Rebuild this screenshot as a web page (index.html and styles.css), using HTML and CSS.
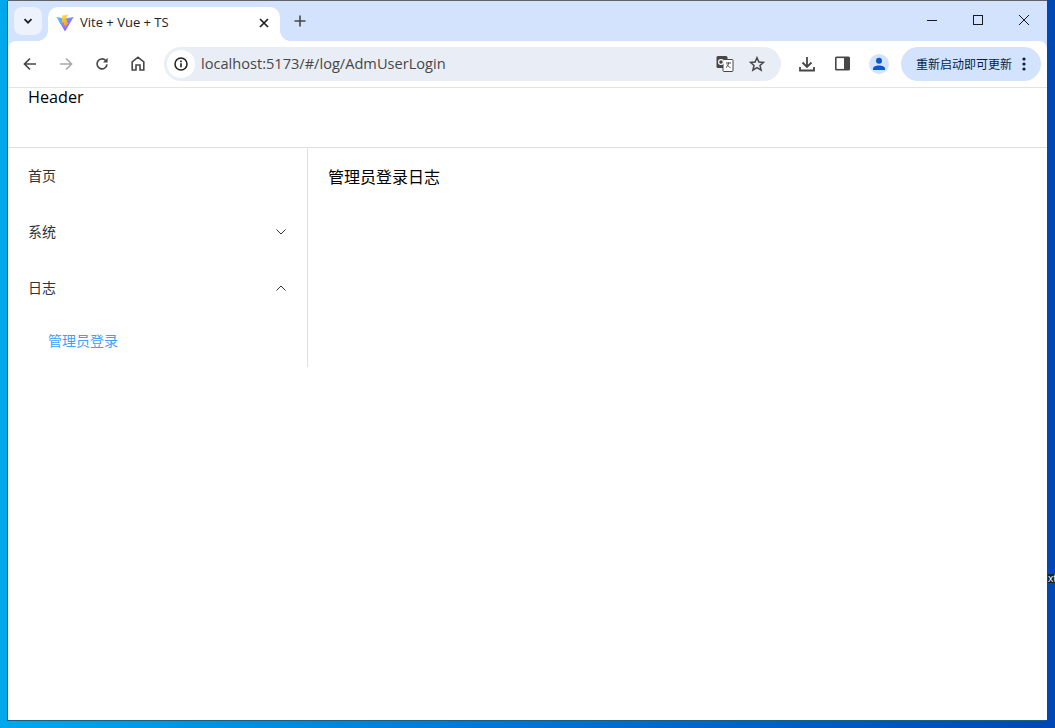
FILE: index.html
```html
<!DOCTYPE html>
<html lang="zh-CN">
<head>
  <meta charset="UTF-8" />
  <title>Vite + Vue + TS</title>
  <meta name="viewport" content="width=device-width, initial-scale=1.0" />
  <link rel="stylesheet" href="styles.css">
</head>
<body>
  <div class="window">

    <!-- tab strip -->
    <div class="tabstrip">
      <button class="tabSearch">
        <svg width="12" height="12" viewBox="0 0 12 12"><path d="M2.5 4.2 6 7.7l3.5-3.5" fill="none" stroke="#1f1f1f" stroke-width="1.8"/></svg>
      </button>
      <div class="tab">
        <svg class="favicon" width="18" height="18" viewBox="0 0 18 18">
          <defs>
            <linearGradient id="viteA" x1="0" y1="0" x2="1" y2="1"><stop offset="0" stop-color="#41d1ff"/><stop offset="1" stop-color="#bd34fe"/></linearGradient>
            <linearGradient id="viteB" x1="0" y1="0" x2="0" y2="1"><stop offset="0" stop-color="#ffdd55"/><stop offset="1" stop-color="#ff9a00"/></linearGradient>
          </defs>
          <path d="M0.4 3 9 17.4 17.6 3 9 4.6z" fill="url(#viteA)"/>
          <path d="M12.4 0.4 6.2 1.6 5.800 8.800l2.200-.4-.4 2.800 1.600-.4-.4 3.200L12.400 8.400l-2 .4.700-3-2 .4z" fill="url(#viteB)"/>
        </svg>
        <span class="tabTitle">Vite + Vue + TS</span>
        <svg class="tabClose" width="10" height="10" viewBox="0 0 10 10"><path d="M1 1l8 8M9 1 1 9" stroke="#1f1f1f" stroke-width="1.7"/></svg>
      </div>
      <svg class="newTab" width="12" height="12" viewBox="0 0 12 12"><path d="M6 0.5v11M0.5 6h11" stroke="#474747" stroke-width="1.6"/></svg>
      <div class="winBtns">
        <svg width="10" height="10" viewBox="0 0 10 10"><path d="M0 5.500h10" stroke="#1a1a1a"/></svg>
        <svg width="10" height="10" viewBox="0 0 10 10"><rect x="0.5" y="0.5" width="9" height="9" fill="none" stroke="#1a1a1a"/></svg>
        <svg width="10" height="10" viewBox="0 0 10 10"><path d="M0 0l10 10M10 0 0 10" stroke="#1a1a1a"/></svg>
      </div>
    </div>

    <!-- address bar -->
    <div class="toolbar">
      <div class="navBtns">
        <svg width="14" height="14" viewBox="0 0 14 14"><path d="M13 7H2M7 1.5 1.5 7 7 12.5" fill="none" stroke="#474747" stroke-width="1.7"/></svg>
        <svg width="14" height="14" viewBox="0 0 14 14"><path d="M1 7h11M7 1.5 12.5 7 7 12.5" fill="none" stroke="#ababab" stroke-width="1.7"/></svg>
        <svg width="14" height="14" viewBox="0 0 14 14"><path d="M12 7.4A5 5 0 1 1 10.6 3.4" fill="none" stroke="#474747" stroke-width="1.6"/><path d="M12.6 0.8v4.6H8z" fill="#474747"/></svg>
        <svg width="14" height="15" viewBox="0 0 14 15"><path d="M1.2 14V5.8L7 1.2l5.8 4.6V14H9V9H5v5z" fill="none" stroke="#474747" stroke-width="1.6"/></svg>
      </div>
      <div class="omnibox">
        <div class="siteInfo">
          <svg width="14" height="14" viewBox="0 0 14 14"><circle cx="7" cy="7" r="6" fill="none" stroke="#1f1f1f" stroke-width="1.5"/><path d="M7 6.2v4M7 3.6v1.6" stroke="#1f1f1f" stroke-width="1.6"/></svg>
        </div>
        <span class="url">localhost:5173/#/log/AdmUserLogin</span>
        <svg class="translate" width="18" height="18" viewBox="0 0 18 18"><rect x="0.5" y="1" width="11" height="12" rx="1.5" fill="#474747"/><rect x="7" y="4.500" width="10" height="12" rx="1" fill="#fff" stroke="#474747"/><circle cx="5" cy="7" r="2.400" fill="none" stroke="#fff" stroke-width="1.200"/><path d="M10 8h5M12.500 7.500c0 2.500-1 4-2.500 5M11 9.500c.8 1.500 2.200 2.800 3.500 3.200" fill="none" stroke="#474747"/></svg>
        <svg class="star" width="16" height="16" viewBox="0 0 16 16"><path d="M8 1.700l1.900 4.300 4.600.4-3.500 3.100 1.100 4.600L8 11.700l-4.100 2.400L5 9.500 1.500 6.400l4.600-.4z" fill="none" stroke="#474747" stroke-width="1.500"/></svg>
      </div>
      <div class="actions">
        <svg width="16" height="16" viewBox="0 0 16 16"><path d="M8 1v9.500M3.500 6.500 8 11l4.500-4.500" fill="none" stroke="#474747" stroke-width="1.800"/><path d="M1 11v3.500h14V11" fill="none" stroke="#474747" stroke-width="1.800"/></svg>
        <svg width="15" height="15" viewBox="0 0 15 15"><rect x="0" y="0.500" width="15" height="14" rx="1.500" fill="#474747"/><rect x="1.600" y="2.100" width="7.400" height="10.800" fill="#fff"/></svg>
        <div class="avatar">
          <svg width="14" height="14" viewBox="0 0 14 14"><circle cx="7" cy="3.800" r="3" fill="#0b57d0"/><path d="M1 13v-1.400C1 9.600 4 8.400 7 8.400s6 1.200 6 3.200V13z" fill="#0b57d0"/></svg>
        </div>
      </div>
      <div class="updateBtn">
        <span>重新启动即可更新</span>
        <svg width="4" height="14" viewBox="0 0 4 14"><circle cx="2" cy="2" r="1.600" fill="#041e49"/><circle cx="2" cy="7" r="1.600" fill="#041e49"/><circle cx="2" cy="12" r="1.600" fill="#041e49"/></svg>
      </div>
    </div>

    <!-- page -->
    <div class="page">
      <header class="pageHeader">Header</header>
      <div class="pageBody">
        <ul class="menu">
          <li class="menuItem">首页</li>
          <li class="menuItem">系统
            <svg width="10" height="6" viewBox="0 0 10 6"><path d="M0.500 0.500 5 5l4.500-4.500" fill="none" stroke="#303133"/></svg>
          </li>
          <li class="menuItem">日志
            <svg width="10" height="6" viewBox="0 0 10 6"><path d="M0.500 5.500 5 1l4.500 4.500" fill="none" stroke="#303133"/></svg>
          </li>
          <li class="subItem">管理员登录</li>
        </ul>
        <main class="content">管理员登录日志</main>
      </div>
    </div>
  </div>
  <span class="desktopLabel">xt</span>
</body>
</html>
```

FILE: styles.css
```css
* {
  box-sizing: border-box;
}

html, body {
  height: 100%;
}

body {
  margin: 0;
  padding: 0 8px 8px;
  background: linear-gradient(90deg, #00a8ec 0%, #0078d7 45%, #0048b4 100%);
  font-family: "Open Sans", "Noto Sans CJK SC", sans-serif;
  overflow: hidden;
}

.window {
  height: 100%;
  display: flex;
  flex-direction: column;
  background: #d3e3fd;
  box-shadow: -1px 1px 0 #1d5f80;
}

.tabstrip {
  height: 41px;
  flex: none;
  display: flex;
  align-items: flex-end;
  border-top: 1px solid #5f6368;
  padding-left: 6px;
}

.tabSearch {
  width: 28px;
  height: 28px;
  margin-bottom: 6px;
  padding: 0;
  border: none;
  border-radius: 8px;
  background: #edf2fc;
  display: flex;
  align-items: center;
  justify-content: center;
}

.tab {
  position: relative;
  width: 232px;
  height: 34px;
  margin-left: 6px;
  padding: 0 11px 2px 8px;
  display: flex;
  align-items: center;
  background: #fff;
  border-radius: 10px 10px 0 0;
}

/* curved feet of the active tab */
.tab::before,
.tab::after {
  content: "";
  position: absolute;
  bottom: 0;
  width: 10px;
  height: 10px;
}

.tab::before {
  left: -10px;
  background: radial-gradient(circle at 0 0, transparent 9.500px, #fff 10px);
}

.tab::after {
  right: -10px;
  background: radial-gradient(circle at 100% 0, transparent 9.500px, #fff 10px);
}

.favicon {
  flex: none;
}

.tabTitle {
  flex: 1;
  margin: 0 0 2px 6px;
  font-size: 13px;
  color: #1f1f1f;
}

.newTab {
  margin: 0 0 14px 14px;
}

.winBtns {
  margin-left: auto;
  height: 100%;
  display: flex;
  align-items: center;
  gap: 36px;
  padding: 0 18px 2px 0;
}

.toolbar {
  height: 47px;
  flex: none;
  display: flex;
  align-items: center;
  padding: 0 6px 1px 0;
  background: #fff;
  border-bottom: 1px solid #e3e3e3;
  border-radius: 8px 8px 0 0;
}

.navBtns {
  display: flex;
  align-items: center;
  gap: 22px;
  padding-left: 15px;
}

.omnibox {
  width: 617px;
  height: 34px;
  margin-left: 19px;
  padding: 0 16px 0 3px;
  display: flex;
  align-items: center;
  background: #e9edf6;
  border-radius: 17px;
}

.siteInfo {
  width: 28px;
  height: 28px;
  flex: none;
  display: flex;
  align-items: center;
  justify-content: center;
  background: #fff;
  border-radius: 50%;
}

.url {
  flex: 1;
  margin: 0 0 2px 6px;
  font-size: 14.6px;
  color: #474747;
}

.star {
  margin-left: 15px;
}

.actions {
  display: flex;
  align-items: center;
  margin-left: 18px;
  gap: 20px;
}

.avatar {
  width: 20px;
  height: 20px;
  margin-left: -1px;
  display: flex;
  align-items: center;
  justify-content: center;
  background: #d3e3fd;
  border-radius: 50%;
}

.updateBtn {
  margin-left: auto;
  width: 140px;
  height: 34px;
  padding: 0 15px;
  display: flex;
  align-items: center;
  justify-content: space-between;
  background: #d3e3fd;
  border-radius: 17px;
  font-size: 12px;
  color: #041e49;
}

.page {
  flex: 1;
  background: #fff;
  color: #000;
}

.pageHeader {
  height: 60px;
  padding: 0 20px;
  border-bottom: 1px solid #dcdfe6;
  font-size: 16.2px;
  line-height: 18px;
}

.pageBody {
  display: flex;
  align-items: flex-start;
}

.menu {
  width: 300px;
  margin: 0;
  padding: 0;
  list-style: none;
  border-right: 1px solid #dcdfe6;
  font-size: 14px;
  color: #303133;
}

.menuItem {
  height: 56px;
  padding: 0 20px 2px;
  display: flex;
  align-items: center;
  justify-content: space-between;
}

.menuItem svg {
  margin: 2px 1px 0 0;
}

.subItem {
  height: 51px;
  padding: 0 40px 3px;
  display: flex;
  align-items: center;
  color: #409eff;
}

.content {
  flex: 1;
  padding: 20px;
  font-size: 16px;
  line-height: 18px;
}

.desktopLabel {
  position: absolute;
  left: 1048px;
  top: 574px;
  height: 9px;
  font-size: 10px;
  line-height: 9px;
  color: #fff;
  background: #123;
}
```
